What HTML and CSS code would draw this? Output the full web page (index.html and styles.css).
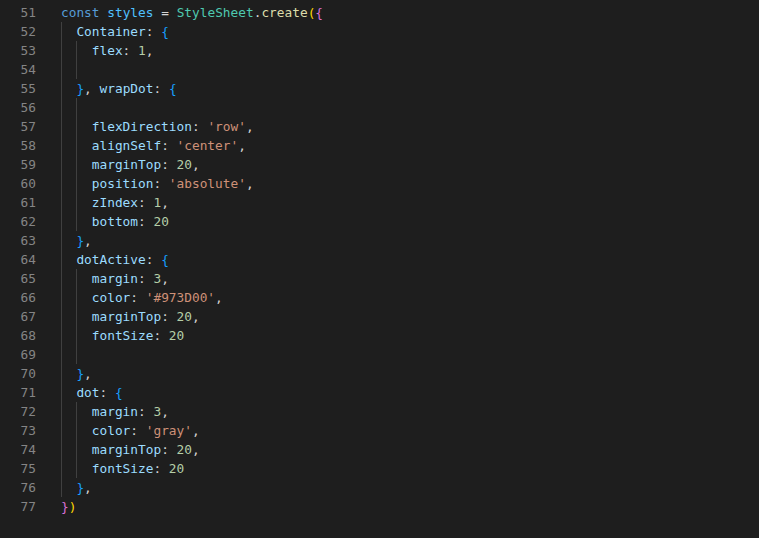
FILE: index.html
```html
<!DOCTYPE html>
<html>
<head>
<meta charset="utf-8">
<link rel="stylesheet" href="styles.css">
</head>
<body>
<div class="editor">
  <div class="ln"><span class="num">51</span><span class="code"><span class="kw">const</span> <span class="cv">styles</span> <span class="p">=</span> <span class="ty">StyleSheet</span><span class="p">.</span><span class="fn">create</span><span class="b1">(</span><span class="b2">{</span></span></div>
  <div class="ln"><span class="num">52</span><span class="code"><i class="g"></i><span class="pr">Container</span><span class="p">: </span><span class="b3">{</span></span></div>
  <div class="ln"><span class="num">53</span><span class="code"><i class="g"></i><i class="g"></i><span class="pr">flex</span><span class="p">: </span><span class="nu">1</span><span class="p">,</span></span></div>
  <div class="ln"><span class="num">54</span><span class="code"><i class="g"></i><i class="g"></i></span></div>
  <div class="ln"><span class="num">55</span><span class="code"><i class="g"></i><span class="b3">}</span><span class="p">, </span><span class="pr">wrapDot</span><span class="p">: </span><span class="b3">{</span></span></div>
  <div class="ln"><span class="num">56</span><span class="code"><i class="g"></i><i class="g"></i></span></div>
  <div class="ln"><span class="num">57</span><span class="code"><i class="g"></i><i class="g"></i><span class="pr">flexDirection</span><span class="p">: </span><span class="st">'row'</span><span class="p">,</span></span></div>
  <div class="ln"><span class="num">58</span><span class="code"><i class="g"></i><i class="g"></i><span class="pr">alignSelf</span><span class="p">: </span><span class="st">'center'</span><span class="p">,</span></span></div>
  <div class="ln"><span class="num">59</span><span class="code"><i class="g"></i><i class="g"></i><span class="pr">marginTop</span><span class="p">: </span><span class="nu">20</span><span class="p">,</span></span></div>
  <div class="ln"><span class="num">60</span><span class="code"><i class="g"></i><i class="g"></i><span class="pr">position</span><span class="p">: </span><span class="st">'absolute'</span><span class="p">,</span></span></div>
  <div class="ln"><span class="num">61</span><span class="code"><i class="g"></i><i class="g"></i><span class="pr">zIndex</span><span class="p">: </span><span class="nu">1</span><span class="p">,</span></span></div>
  <div class="ln"><span class="num">62</span><span class="code"><i class="g"></i><i class="g"></i><span class="pr">bottom</span><span class="p">: </span><span class="nu">20</span></span></div>
  <div class="ln"><span class="num">63</span><span class="code"><i class="g"></i><span class="b3">}</span><span class="p">,</span></span></div>
  <div class="ln"><span class="num">64</span><span class="code"><i class="g"></i><span class="pr">dotActive</span><span class="p">: </span><span class="b3">{</span></span></div>
  <div class="ln"><span class="num">65</span><span class="code"><i class="g"></i><i class="g"></i><span class="pr">margin</span><span class="p">: </span><span class="nu">3</span><span class="p">,</span></span></div>
  <div class="ln"><span class="num">66</span><span class="code"><i class="g"></i><i class="g"></i><span class="pr">color</span><span class="p">: </span><span class="st">'#973D00'</span><span class="p">,</span></span></div>
  <div class="ln"><span class="num">67</span><span class="code"><i class="g"></i><i class="g"></i><span class="pr">marginTop</span><span class="p">: </span><span class="nu">20</span><span class="p">,</span></span></div>
  <div class="ln"><span class="num">68</span><span class="code"><i class="g"></i><i class="g"></i><span class="pr">fontSize</span><span class="p">: </span><span class="nu">20</span></span></div>
  <div class="ln"><span class="num">69</span><span class="code"><i class="g"></i><i class="g"></i></span></div>
  <div class="ln"><span class="num">70</span><span class="code"><i class="g"></i><span class="b3">}</span><span class="p">,</span></span></div>
  <div class="ln"><span class="num">71</span><span class="code"><i class="g"></i><span class="pr">dot</span><span class="p">: </span><span class="b3">{</span></span></div>
  <div class="ln"><span class="num">72</span><span class="code"><i class="g"></i><i class="g"></i><span class="pr">margin</span><span class="p">: </span><span class="nu">3</span><span class="p">,</span></span></div>
  <div class="ln"><span class="num">73</span><span class="code"><i class="g"></i><i class="g"></i><span class="pr">color</span><span class="p">: </span><span class="st">'gray'</span><span class="p">,</span></span></div>
  <div class="ln"><span class="num">74</span><span class="code"><i class="g"></i><i class="g"></i><span class="pr">marginTop</span><span class="p">: </span><span class="nu">20</span><span class="p">,</span></span></div>
  <div class="ln"><span class="num">75</span><span class="code"><i class="g"></i><i class="g"></i><span class="pr">fontSize</span><span class="p">: </span><span class="nu">20</span></span></div>
  <div class="ln"><span class="num">76</span><span class="code"><i class="g"></i><span class="b3">}</span><span class="p">,</span></span></div>
  <div class="ln"><span class="num">77</span><span class="code"><span class="b2">}</span><span class="b1">)</span></span></div>
</div>
</body>
</html>
```
FILE: styles.css
```css
html, body {
  margin: 0;
  padding: 0;
  background: #1e1e1e;
  width: 759px;
  height: 538px;
  overflow: hidden;
}

.editor {
  padding-top: 3px;
  font-family: "DejaVu Sans Mono", "Liberation Mono", monospace;
  font-size: 12.8px;
  line-height: 19px;
  color: #d4d4d4;
}

.ln {
  display: flex;
  height: 19px;
  white-space: pre;
}

.num {
  width: 36px;
  text-align: right;
  color: #858585;
  flex: none;
}

.code {
  display: block;
  margin-left: 25px;
  white-space: pre;
}

.g {
  display: inline-block;
  vertical-align: top;
  width: 15.4px;
  height: 19px;
  box-sizing: border-box;
  border-left: 1px solid #404040;
}

.kw { color: #569cd6; }
.cv { color: #4fc1ff; }
.p { color: #d4d4d4; }
.ty { color: #4ec9b0; }
.fn { color: #dcdcaa; }
.b1 { color: #ffd700; }
.b2 { color: #da70d6; }
.b3 { color: #179fff; }
.pr { color: #9cdcfe; }
.nu { color: #b5cea8; }
.st { color: #ce9178; }
```
